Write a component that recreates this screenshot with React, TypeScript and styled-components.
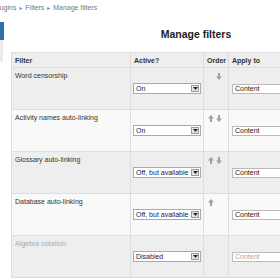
import styled, { createGlobalStyle } from 'styled-components';

const GlobalStyle = createGlobalStyle`
  body {
    margin: 0;
    background: #ffffff;
    font-family: "Liberation Sans", Arial, sans-serif;
    overflow: hidden;
  }
`;

type Filter = {
  name: string;
  active: string;
  up: boolean;
  down: boolean;
  disabled?: boolean;
};

const FILTERS: Filter[] = [
  { name: 'Word censorship', active: 'On', up: false, down: true },
  { name: 'Activity names auto-linking', active: 'On', up: true, down: true },
  { name: 'Glossary auto-linking', active: 'Off, but available', up: true, down: true },
  { name: 'Database auto-linking', active: 'Off, but available', up: true, down: false },
  { name: 'Algebra notation', active: 'Disabled', up: false, down: false, disabled: true },
];

const Arrow = ({ dir }: { dir: 'up' | 'down' }) => (
  <svg width="6" height="7" viewBox="0 0 6 7">
    {dir === 'up' ? (
      <path d="M3 0 L6 3.5 H4 V7 H2 V3.5 H0 Z" fill="#a0a0a0" />
    ) : (
      <path d="M3 7 L6 3.5 H4 V0 H2 V3.5 H0 Z" fill="#a0a0a0" />
    )}
  </svg>
);

const App = () => {
  const rows = FILTERS.map((f, idx) => (
    <Row key={f.name} $odd={idx % 2 === 0}>
      <NameCell $disabled={f.disabled}>{f.name}</NameCell>
      <MidCell>
        <SelectBox>
          <SelectValue>{f.active}</SelectValue>
          <SelectButton>
            <svg width="5" height="3" viewBox="0 0 5 3">
              <path d="M0 0 H5 L2.5 3 Z" fill="#222" />
            </svg>
          </SelectButton>
        </SelectBox>
      </MidCell>
      <OrderCell>
        <Arrows>
          <ArrowSlot>{f.up && <Arrow dir="up" />}</ArrowSlot>
          <ArrowSlot>{f.down && <Arrow dir="down" />}</ArrowSlot>
        </Arrows>
      </OrderCell>
      <MidCell>
        <TextInput $disabled={f.disabled}>Content</TextInput>
      </MidCell>
    </Row>
  ));

  return (
    <>
      <GlobalStyle />
      <Page>
        <Breadcrumb>
          Plugins <Sep>►</Sep> Filters <Sep>►</Sep> Manage filters
        </Breadcrumb>
        <Body>
          <Sidebar>
            <BlueBlock />
            <GrayBlock />
          </Sidebar>
          <Main>
            <Title>Manage filters</Title>
            <Table>
              <colgroup>
                <col style={{ width: 119 }} />
                <col style={{ width: 73 }} />
                <col style={{ width: 25 }} />
                <col />
              </colgroup>
              <thead>
                <tr>
                  <Th>Filter</Th>
                  <Th>Active?</Th>
                  <Th>Order</Th>
                  <Th>Apply to</Th>
                </tr>
              </thead>
              <tbody>{rows}</tbody>
            </Table>
          </Main>
        </Body>
      </Page>
    </>
  );
};

const Page = styled.div`
  width: 400px;
`;

const Breadcrumb = styled.div`
  margin-left: -6.5px;
  padding-top: 3px;
  height: 11px;
  font-size: 7px;
  line-height: 9px;
  color: #777777;
  white-space: nowrap;
`;

const Sep = styled.span`
  font-size: 5px;
  color: #888888;
`;

const Body = styled.div`
  display: grid;
  grid-template-columns: 4px 370px;
  column-gap: 7px;
`;

const Sidebar = styled.div`
  display: flex;
  flex-direction: column;
  padding-top: 8px;
`;

const BlueBlock = styled.div`
  height: 18px;
  background: #2f6ea8;
`;

const GrayBlock = styled.div`
  height: 22px;
  width: 3px;
  background: #ececec;
`;

const Main = styled.div`
  display: flex;
  flex-direction: column;
`;

const Title = styled.h2`
  margin: 13px 0 11px;
  text-align: center;
  font-size: 10.5px;
  line-height: 14px;
  font-weight: bold;
  color: #222222;
`;

const Table = styled.table`
  border-collapse: collapse;
  width: 100%;
  table-layout: fixed;
  border: 1px solid #dddddd;
  font-size: 7px;
  color: #333333;
`;

const Th = styled.th`
  height: 14px;
  padding: 0 3px;
  text-align: left;
  font-weight: bold;
  background: #eeeeee;
  border: 1px solid #dddddd;
  white-space: nowrap;
  overflow: hidden;
`;

const Row = styled.tr<{ $odd: boolean }>`
  height: 42px;
  background: ${(p) => (p.$odd ? '#eeeeee' : '#f9f9f9')};
  border-bottom: 1px solid #dddddd;
`;

const NameCell = styled.td<{ $disabled?: boolean }>`
  vertical-align: top;
  padding: 3px 3px;
  line-height: 9px;
  border-right: 1px solid #dddddd;
  color: ${(p) => (p.$disabled ? '#aaaaaa' : '#333333')};
  white-space: nowrap;
`;

const MidCell = styled.td`
  vertical-align: middle;
  padding: 0 2px;
  border-right: 1px solid #dddddd;
`;

const OrderCell = styled.td`
  vertical-align: top;
  padding: 5px 0 0 4px;
  border-right: 1px solid #dddddd;
`;

const Arrows = styled.div`
  display: flex;
  gap: 2px;
`;

const ArrowSlot = styled.span`
  display: inline-flex;
  width: 6px;
  height: 7px;
`;

const SelectBox = styled.div`
  display: flex;
  align-items: stretch;
  height: 11px;
  width: 68px;
  box-sizing: border-box;
  border: 1px solid #a9a9a9;
  background: #ffffff;
`;

const SelectValue = styled.span`
  flex: 1;
  padding-left: 2px;
  line-height: 9px;
  font-size: 7px;
  color: #222244;
  white-space: nowrap;
  overflow: hidden;
`;

const SelectButton = styled.span`
  display: flex;
  align-items: center;
  justify-content: center;
  width: 8px;
  margin: 1px;
  background: #e4e4e4;
  border: 1px solid #9a9a9a;
  box-sizing: border-box;
`;

const TextInput = styled.div<{ $disabled?: boolean }>`
  height: 10px;
  width: 90px;
  box-sizing: border-box;
  margin-left: 1px;
  padding-left: 2px;
  line-height: 8px;
  font-size: 7px;
  border: 1px solid #bbbbbb;
  background: #ffffff;
  color: ${(p) => (p.$disabled ? '#aaaaaa' : '#222222')};
`;

export default App;
